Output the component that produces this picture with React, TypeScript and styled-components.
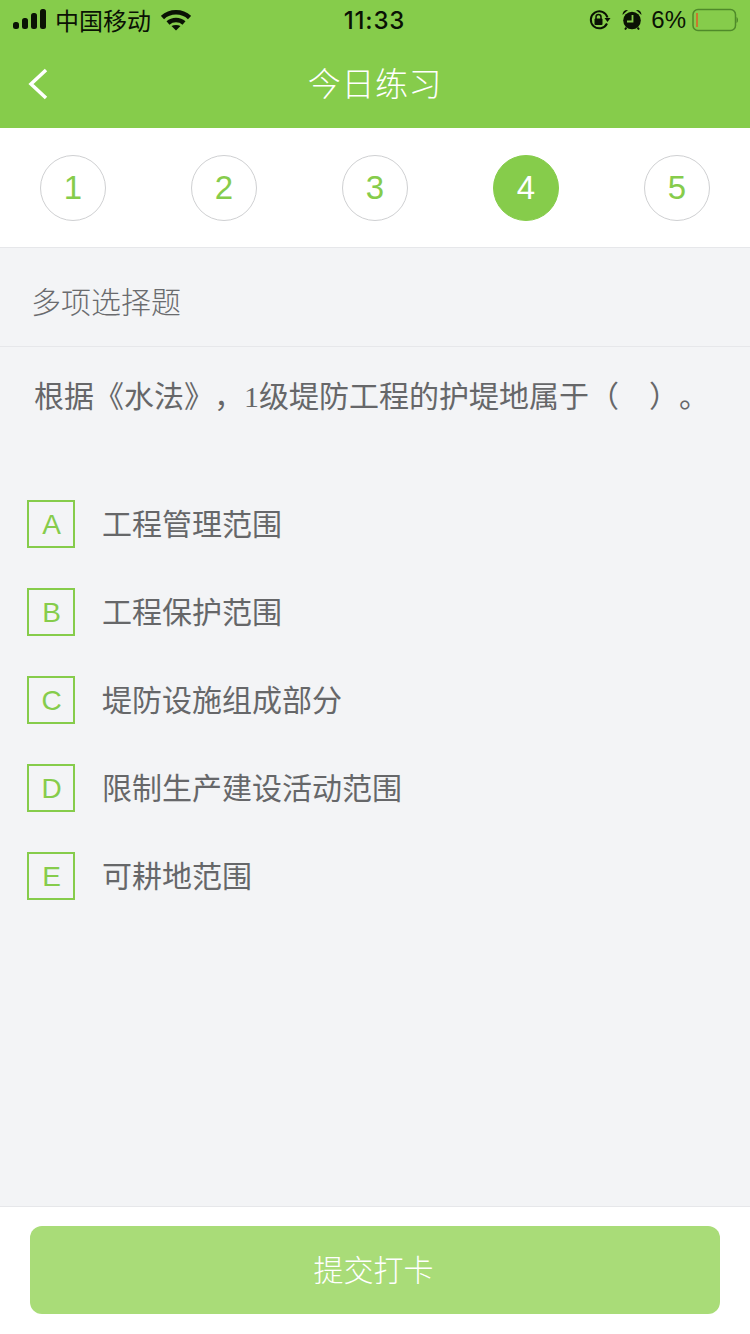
import React from 'react'
import styled, {createGlobalStyle} from 'styled-components'

const CJK = `"Noto Sans CJK SC", "Liberation Sans", sans-serif`

const GlobalStyle = createGlobalStyle`
  html, body {
    margin: 0;
    padding: 0;
    background: #f3f4f6;
  }
  * {
    box-sizing: border-box;
  }
`

const Page = styled.div`
  width: 750px;
  height: 1334px;
  display: flex;
  flex-direction: column;
  background: #f3f4f6;
  font-family: ${CJK};
  text-spacing-trim: space-all;
  overflow: hidden;
`

const Header = styled.header`
  height: 128px;
  background: #86cc4b;
  display: flex;
  flex-direction: column;
`

const StatusBar = styled.div`
  height: 40px;
  display: flex;
  align-items: center;
  justify-content: space-between;
  padding: 0 12px 0 13px;
  color: #0a1204;
`

const StatusSide = styled.div<{$end?: boolean}>`
  width: 290px;
  display: flex;
  align-items: center;
  justify-content: ${(p) => (p.$end ? 'flex-end' : 'flex-start')};
`

const Carrier = styled.span`
  font-size: 24px;
  line-height: 30px;
  margin: 0 10px 0 8px;
`

const Clock = styled.span`
  font-family: Inter, "Liberation Sans", sans-serif;
  font-size: 24px;
  font-weight: 500;
  letter-spacing: 0.8px;
  margin-left: -2px;
`

const AlarmSlot = styled.span`
  display: flex;
  margin: 0 0 2px 11px;
`

const Percent = styled.span`
  font-family: "Liberation Sans", sans-serif;
  font-size: 24px;
  margin: 0 6px 0 9px;
`

const SignalSvg = styled.svg`
  margin-bottom: 2px;
`

const NavBar = styled.div`
  flex: 1;
  display: flex;
  align-items: center;
  justify-content: center;
  position: relative;
  padding-bottom: 5px;
`

const BackIcon = styled.svg`
  position: absolute;
  left: 28px;
  top: 28px;
`

const Title = styled.h1`
  margin: 0;
  font-size: 33px;
  font-weight: 300;
  color: #fff;
  letter-spacing: 0.6px;
`

const Steps = styled.nav`
  height: 120px;
  background: #fff;
  border-bottom: 1px solid #e6e7ea;
  padding: 1px 40px 0;
  display: flex;
  align-items: center;
  justify-content: space-between;
`

const Step = styled.div<{$active?: boolean}>`
  width: 66px;
  height: 66px;
  border-radius: 50%;
  display: flex;
  align-items: center;
  justify-content: center;
  font-family: "Liberation Sans", sans-serif;
  font-size: 33px;
  color: ${(p) => (p.$active ? '#fff' : '#86cc4b')};
  background: ${(p) => (p.$active ? '#86cc4b' : '#fff')};
  border: 1px solid ${(p) => (p.$active ? '#86cc4b' : '#cfd0d2')};
`

const SectionLabel = styled.div`
  height: 99px;
  border-bottom: 1px solid #e6e7ea;
  padding: 5px 0 0 31px;
  display: flex;
  align-items: center;
  font-size: 30px;
  font-weight: 300;
  color: #6a6b6e;
`

const Question = styled.p`
  margin: 0;
  padding: 27px 0 0 34px;
  height: 153px;
  font-size: 30px;
  line-height: 40px;
  font-weight: 400;
  color: #666769;
  white-space: pre;
`

const SerifDigit = styled.span`
  font-family: "Liberation Serif", serif;
`

const Options = styled.ul`
  flex: 1;
  margin: 0;
  padding: 0 0 0 27px;
  list-style: none;
  display: flex;
  flex-direction: column;
  gap: 40px;
`

const Option = styled.li`
  height: 48px;
  display: flex;
  align-items: center;
  gap: 28px;
`

const OptionKey = styled.span`
  width: 48px;
  height: 48px;
  padding: 2px 0 0 1px;
  border: 2px solid #86cc4b;
  display: flex;
  align-items: center;
  justify-content: center;
  font-family: "Liberation Sans", sans-serif;
  font-size: 28px;
  color: #86cc4b;
`

const OptionText = styled.span`
  margin: -4px 0 0 -1px;
  font-size: 30px;
  font-weight: 400;
  color: #666769;
`

const Footer = styled.footer`
  height: 128px;
  background: #fff;
  border-top: 1px solid #e6e7ea;
  padding: 19px 30px 20px;
`

const SubmitButton = styled.button`
  width: 100%;
  height: 88px;
  padding: 0 3px 4px 0;
  border: 0;
  border-radius: 12px;
  background: #a9dc78;
  color: #fff;
  font-family: ${CJK};
  font-size: 30px;
  font-weight: 300;
`

const SignalIcon = () => (
  <SignalSvg width="34" height="20" viewBox="0 0 34 20" fill="#0a1204">
    <rect x="0" y="13" width="6" height="7" rx="2.500" />
    <rect x="9" y="9" width="6" height="11" rx="2.500" />
    <rect x="18" y="4" width="6" height="16" rx="2.500" />
    <rect x="27" y="0" width="6" height="20" rx="2.500" />
  </SignalSvg>
)

const WifiIcon = () => (
  <svg width="30" height="22" viewBox="0 0 30 22" fill="none" stroke="#0a1204" strokeWidth="4.500">
    <path d="M1.500 8.500C9 1.500 21 1.500 28.500 8.500" />
    <path d="M7 14C11.500 10 18.500 10 23 14" />
    <path d="M10.500 17C13 15.500 17 15.500 19.500 17L15 21.500Z" fill="#0a1204" stroke="none" />
  </svg>
)

const RotationLockIcon = () => (
  <svg width="22" height="22" viewBox="0 0 22 22" fill="none" stroke="#0a1204" strokeWidth="2">
    <path d="M18 14.500A8.500 8.500 0 1 1 18.500 8.500" />
    <path d="M15.500 9L21.500 9L18.500 13Z" fill="#0a1204" stroke="none" />
    <rect x="5.500" y="9.500" width="8" height="6.500" rx="1" fill="#0a1204" stroke="none" />
    <path d="M7 10V8A2.500 2.500 0 0 1 12 8V10" strokeWidth="1.500" />
  </svg>
)

const AlarmIcon = () => (
  <svg width="20" height="21" viewBox="0 0 20 21">
    <circle cx="10" cy="11.500" r="8.800" fill="#0a1204" />
    <path d="M.5 6C.5 2.500 3 .5 6 1Z M19.500 6C19.500 2.500 17 .5 14 1Z" fill="#0a1204" />
    <path d="M4.500 18.500L3 20.500M15.500 18.500L17 20.500" stroke="#0a1204" strokeWidth="2" />
    <path d="M10.500 6V12.500H5" fill="none" stroke="#86cc4b" strokeWidth="1.800" />
  </svg>
)

const BatteryIcon = () => (
  <svg width="46" height="24" viewBox="0 0 46 24" fill="none">
    <rect x="1" y="1.500" width="42.500" height="21" rx="5" stroke="#4f8a2a" strokeWidth="1.500" />
    <rect x="4" y="5" width="2" height="14" fill="#c9782f" />
    <path d="M44.500 9V15C45.500 14.500 46 13.500 46 12C46 10.500 45.500 9.500 44.500 9Z" fill="#4f8a2a" />
  </svg>
)

const options = [
  {key: 'A', text: '工程管理范围'},
  {key: 'B', text: '工程保护范围'},
  {key: 'C', text: '堤防设施组成部分'},
  {key: 'D', text: '限制生产建设活动范围'},
  {key: 'E', text: '可耕地范围'},
]

const steps = [1, 2, 3, 4, 5]
const currentStep = 4

export default function App() {
  return (
    <Page>
      <GlobalStyle />
      <Header>
        <StatusBar>
          <StatusSide>
            <SignalIcon />
            <Carrier>中国移动</Carrier>
            <WifiIcon />
          </StatusSide>
          <Clock>11:33</Clock>
          <StatusSide $end>
            <RotationLockIcon />
            <AlarmSlot>
              <AlarmIcon />
            </AlarmSlot>
            <Percent>6%</Percent>
            <BatteryIcon />
          </StatusSide>
        </StatusBar>
        <NavBar>
          <BackIcon width="20" height="32" viewBox="0 0 20 32" fill="none" stroke="#fff" strokeWidth="3.500">
            <path d="M18 2L3 16L18 30" />
          </BackIcon>
          <Title>今日练习</Title>
        </NavBar>
      </Header>
      <Steps>
        {steps.map((n) => (
          <Step key={n} $active={n === currentStep}>
            {n}
          </Step>
        ))}
      </Steps>
      <SectionLabel>多项选择题</SectionLabel>
      <Question>
        根据《水法》，<SerifDigit>1</SerifDigit>级堤防工程的护堤地属于（　）。
      </Question>
      <Options>
        {options.map((o) => (
          <Option key={o.key}>
            <OptionKey>{o.key}</OptionKey>
            <OptionText>{o.text}</OptionText>
          </Option>
        ))}
      </Options>
      <Footer>
        <SubmitButton>提交打卡</SubmitButton>
      </Footer>
    </Page>
  )
}
